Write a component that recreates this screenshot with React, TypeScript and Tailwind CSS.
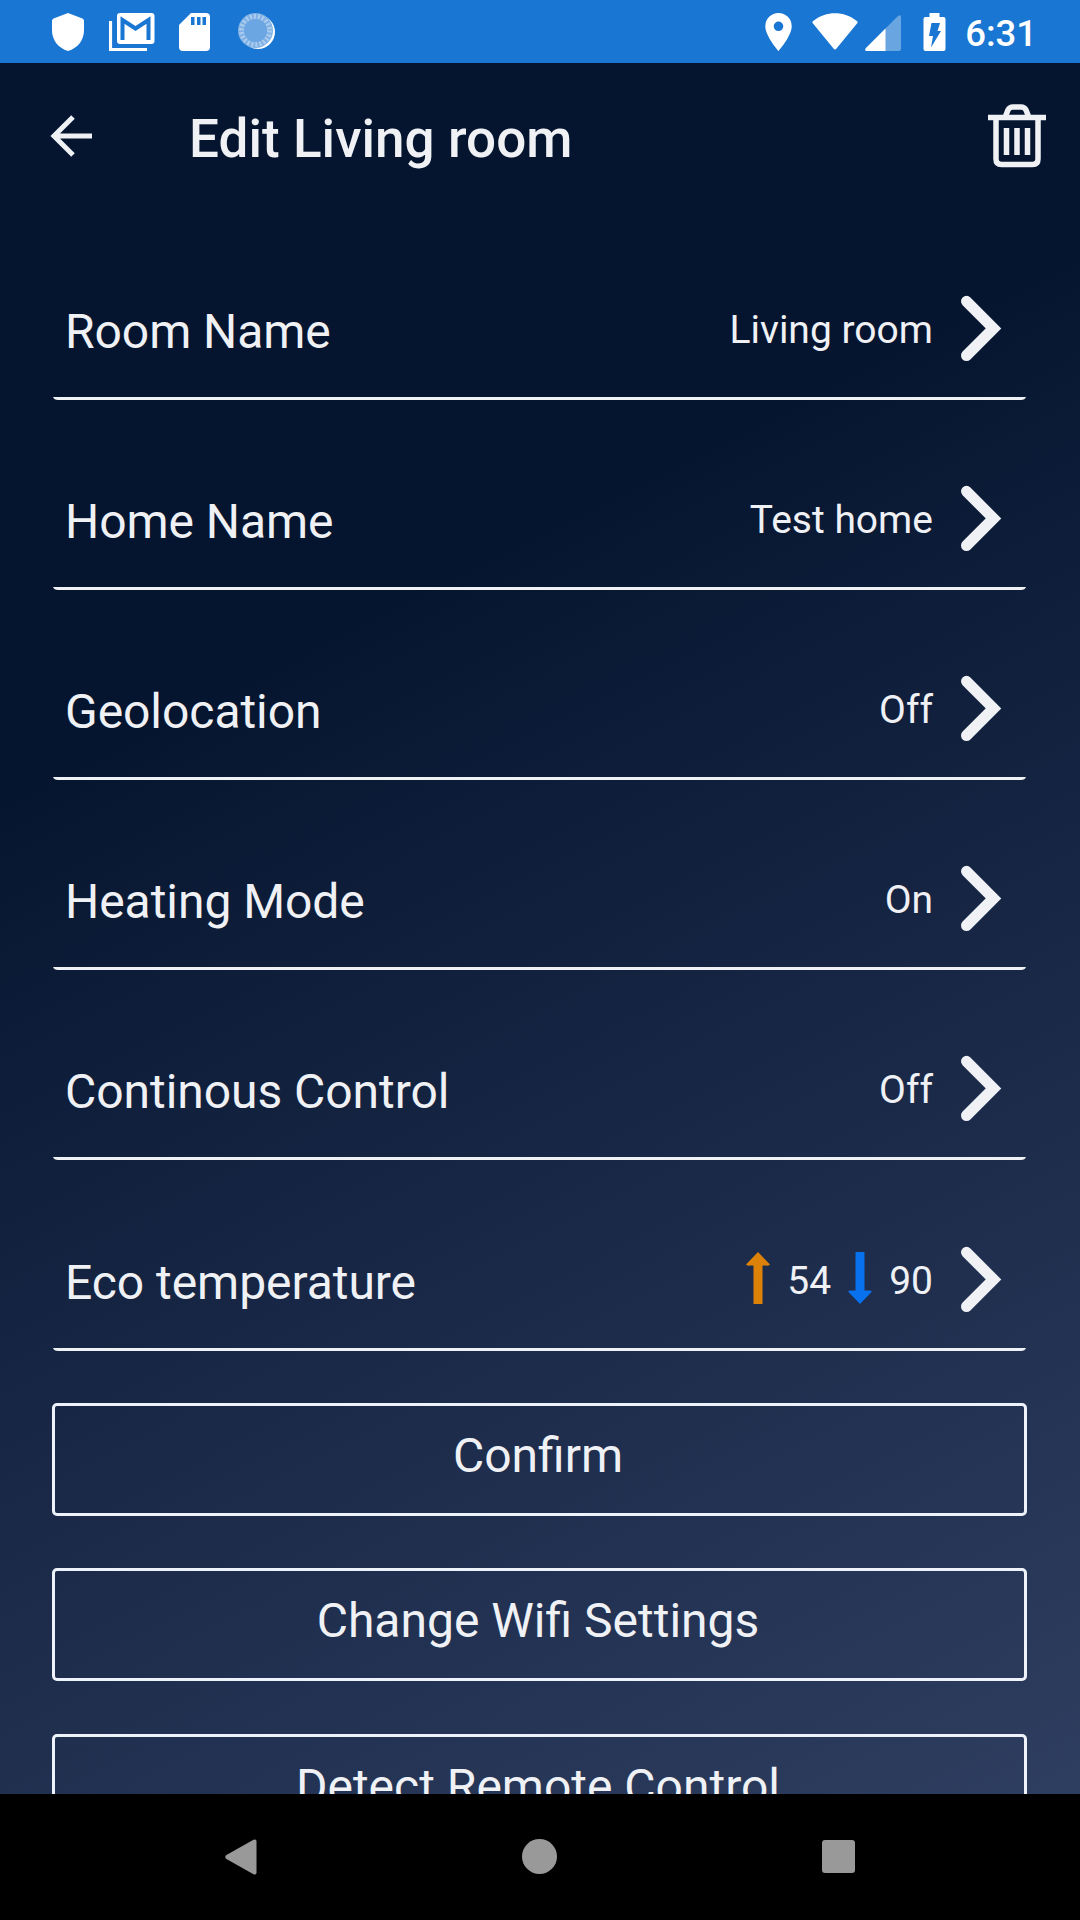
import type { ReactNode } from "react";

function StatusBar() {
  return (
    <header className="flex h-[63px] shrink-0 items-center justify-between bg-[#1976d2] pr-[43px] pl-[52px] text-white">
      <div className="flex items-center">
        <svg className="h-[38px] w-[32px]" viewBox="0 0 32 38" fill="currentColor">
          <path d="M16 0 1.600 5.600Q0 6.300 0 8V17C0 27 6 35 16 38 26 35 32 27 32 17V8Q32 6.300 30.400 5.600Z" />
        </svg>
        <svg className="ml-[25px] h-[38px] w-[46px]" viewBox="0 0 46 38">
          <path d="M1.500 8V36.500H38" fill="none" stroke="white" strokeWidth="3.200" />
          <rect x="8" y="0" width="37.500" height="31" rx="3" fill="white" />
          <path d="M13.500 27V7L26.500 15.500 39.500 7V27" fill="none" stroke="#1976d2" strokeWidth="4" />
        </svg>
        <svg className="ml-[24px] h-[38px] w-[31px]" viewBox="0 0 31 38" fill="white">
          <path d="M12 0H27Q31 0 31 4V34Q31 38 27 38H4Q0 38 0 34V12Z" />
          <path d="M12 4h3.500v8h-3.500zM18 4h3.500v8h-3.500zM23.500 4h3.500v8h-3.500z" fill="#1976d2" />
        </svg>
        <svg className="ml-[28px] h-[38px] w-[38px]" viewBox="0 0 38 38">
          <circle cx="20" cy="19" r="17" fill="white" />
          <circle cx="17.500" cy="17.500" r="17.500" fill="#7fb1e6" />
          <circle cx="17.500" cy="17.500" r="14" fill="none" stroke="#acccee" strokeWidth="5" strokeDasharray="2 2" />
          <circle cx="17.500" cy="17.500" r="11.500" fill="#6ba5e2" />
        </svg>
      </div>
      <div className="flex items-center">
        <svg className="h-[38px] w-[27px]" viewBox="0 0 27 38" fill="white" fillRule="evenodd">
          <path d="M13.500 0A13.200 13.200 0 0 0 .3 13.200C.3 23 13.500 38 13.500 38S26.700 23 26.700 13.200A13.200 13.200 0 0 0 13.500 0ZM13.500 8.500a4.800 4.800 0 1 1 0 9.600 4.800 4.800 0 0 1 0-9.600Z" />
        </svg>
        <svg className="ml-[20px] h-[38px] w-[46px]" viewBox="0 0 46 38" fill="white">
          <path d="M1 10.500Q-.3 9 1.200 7.900C14-2.400 32-2.400 44.800 7.900Q46.300 9 45 10.500L24.500 35.500Q23 37.300 21.500 35.500Z" />
        </svg>
        <svg className="mt-[2px] ml-[7px] h-[36px] w-[36px]" viewBox="0 0 36 36" fill="white">
          <path d="M1 33 33 1Q36 -1 36 2V34Q36 36 34 36H2Q-1 36 1 33Z" opacity=".35" />
          <path d="M1 33 20.500 13.500V36H2Q-1 36 1 33Z" />
        </svg>
        <svg className="ml-[22px] h-[38px] w-[23px]" viewBox="0 0 23 38">
          <path d="M6.500 0H16.500V4H20.500Q22.500 4 22.500 6V36Q22.500 38 20.500 38H2.500Q.5 38 .5 36V6Q.5 4 2.500 4H6.500Z" fill="white" />
          <path d="M8.500 10H17L14.500 18H18L8 34.500 10 23H6Z" fill="#1976d2" />
        </svg>
        <span className="ml-[19px] pt-[4px] text-[36.500px] leading-[44px] font-medium">6:31</span>
      </div>
    </header>
  );
}

function AppBar() {
  return (
    <div className="flex h-[147px] shrink-0 items-center bg-[#06152f] pr-[34px] pl-[50px]">
      <svg className="-mt-px h-[42px] w-[42px]" viewBox="0 0 42 42" fill="none" stroke="currentColor" strokeWidth="5">
        <path d="M42 21H4M23 2 4 21 23 40" />
      </svg>
      <h1 className="mt-[4px] ml-[97px] text-[53px] leading-[64px] font-medium tracking-[0.05px]">Edit Living room</h1>
      <svg className="-mt-[2px] ml-auto h-[64px] w-[58px]" viewBox="0 0 58 64" fill="none" stroke="currentColor" strokeWidth="5.500">
        <path d="M0 13.500H58M8 13.500V55Q8 60.500 13.500 60.500H44.500Q50 60.500 50 55V13.500M17 13.500 20 6Q21.500 3 25 3H33Q36.500 3 38 6L41 13.500" />
        <path d="M18.500 24V51M29 24V51M39.500 24V51" />
      </svg>
    </div>
  );
}

function Chevron() {
  return (
    <svg className="ml-[28px] h-[66px] w-[41px]" viewBox="0 0 41 66" fill="none" stroke="currentColor" strokeWidth="11" strokeLinecap="round" strokeLinejoin="miter">
      <path d="M5.500 6.300 32.500 33.500 5.500 60.500" />
    </svg>
  );
}

function Row({ label, children }: { label: string; children: ReactNode }) {
  return (
    <div className="flex h-[190px] flex-col justify-end last:h-[191px]">
      <div className="flex h-[102px] items-start pr-[24px] pl-[12px]">
        <span className="mt-[9px] text-[48px] leading-[56px] tracking-[-0.05px]">{label}</span>
        <div className="ml-auto flex items-center text-[39px] leading-[46px]">
          {children}
          <Chevron />
        </div>
      </div>
      <svg className="h-[3px] w-full" viewBox="0 0 973 3" preserveAspectRatio="none" fill="currentColor">
        <path d="M0 0H973Q972 3 968 3H5Q1 3 0 0Z" />
      </svg>
    </div>
  );
}

function Arrow({ down = false }: { down?: boolean }) {
  return (
    <svg className={down ? "mb-[2px] h-[52px] w-[24px] rotate-180 text-[#0871ee]" : "mb-[2px] h-[52px] w-[24px] text-[#dd8208]"} viewBox="0 0 24 52" fill="currentColor">
      <path d="M12 0 24 12.500Q23 14 20 13.500H16.500V52H7.500V13.500H4Q1 14 0 12.500Z" />
    </svg>
  );
}

function ActionButton({ children }: { children: ReactNode }) {
  return (
    <button className="flex h-[113px] w-full shrink-0 justify-center rounded-[5px] border-[3px] border-[#eef2fa] pt-[22px] pr-[3px] text-[48px] leading-[56px]">
      {children}
    </button>
  );
}

const settings = [
  ["Room Name", "Living room"],
  ["Home Name", "Test home"],
  ["Geolocation", "Off"],
  ["Heating Mode", "On"],
  ["Continous Control", "Off"],
];

export default function App() {
  return (
    <div className="flex h-[1920px] w-[1080px] flex-col overflow-hidden bg-black font-[Roboto,sans-serif]">
      <StatusBar />
      <main className="flex min-h-0 flex-1 flex-col overflow-hidden bg-[linear-gradient(153deg,#06152f_0%,#06152f_32%,#1c2b4a_68%,#2e3e60_100%)] text-[#eff1f5]">
        <AppBar />
        <div className="flex flex-col pr-[54px] pl-[53px]">
          {settings.map(([label, value]) => (
            <Row key={label} label={label}>
              <span className="pt-[3px]">{value}</span>
            </Row>
          ))}
          <Row label="Eco temperature">
            <Arrow />
            <span className="ml-[17px] pt-[3px]">54</span>
            <span className="ml-[17px] flex"><Arrow down /></span>
            <span className="ml-[17px] pt-[3px]">90</span>
          </Row>
        </div>
        <div className="mt-[52px] flex flex-col gap-[52px] pr-[53px] pl-[52px]">
          <ActionButton>Confirm</ActionButton>
          <ActionButton>Change Wifi Settings</ActionButton>
          <div className="pt-px">
            <ActionButton>Detect Remote Control</ActionButton>
          </div>
        </div>
      </main>
      <nav className="flex h-[126px] shrink-0 items-center pb-px pl-[225px] text-[#999]">
        <svg className="h-[36px] w-[32px]" viewBox="0 0 32 36" fill="currentColor">
          <path d="M1 16.300 28.500.8Q31.500-.5 31.500 2.500V33.500Q31.500 36.500 28.500 35.200L1 19.700Q-.5 18 1 16.300Z" />
        </svg>
        <div className="ml-[265px] size-[35px] rounded-full bg-[#999]" />
        <div className="ml-[265px] size-[33px] rounded-[3px] bg-[#999]" />
      </nav>
    </div>
  );
}
